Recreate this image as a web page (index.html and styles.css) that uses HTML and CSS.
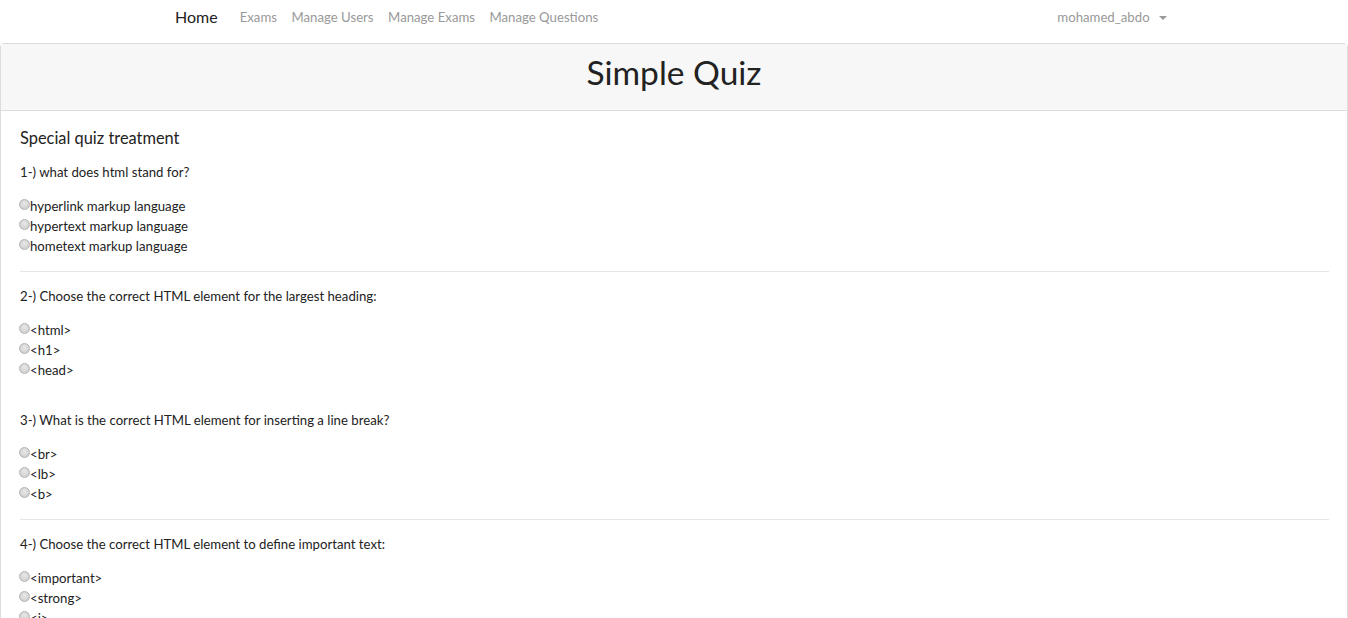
FILE: index.html
```html
<!DOCTYPE html>
<html>
<head>
<meta charset="utf-8">
<link rel="stylesheet" href="styles.css">
</head>
<body>
<nav class="navbar">
  <div class="nav-left">
    <a class="brand">Home</a>
    <a class="nav-link">Exams</a>
    <a class="nav-link">Manage Users</a>
    <a class="nav-link">Manage Exams</a>
    <a class="nav-link">Manage Questions</a>
  </div>
  <div class="nav-right">
    <a class="nav-link user">mohamed_abdo <span class="caret"></span></a>
  </div>
</nav>
<div class="card">
  <div class="card-header"><h1>Simple Quiz</h1></div>
  <div class="card-body">
    <h5 class="quiz-title">Special quiz treatment</h5>
    <div class="question">
      <p class="q-text">1-) what does html stand for?</p>
      <div class="opt"><span class="radio"></span>hyperlink markup language</div>
      <div class="opt"><span class="radio"></span>hypertext markup language</div>
      <div class="opt"><span class="radio"></span>hometext markup language</div>
    </div>
    <div class="sep"></div>
    <div class="question">
      <p class="q-text">2-) Choose the correct HTML element for the largest heading:</p>
      <div class="opt"><span class="radio"></span>&lt;html&gt;</div>
      <div class="opt"><span class="radio"></span>&lt;h1&gt;</div>
      <div class="opt"><span class="radio"></span>&lt;head&gt;</div>
    </div>
    <div class="sep blank"></div>
    <div class="question">
      <p class="q-text">3-) What is the correct HTML element for inserting a line break?</p>
      <div class="opt"><span class="radio"></span>&lt;br&gt;</div>
      <div class="opt"><span class="radio"></span>&lt;lb&gt;</div>
      <div class="opt"><span class="radio"></span>&lt;b&gt;</div>
    </div>
    <div class="sep"></div>
    <div class="question">
      <p class="q-text">4-) Choose the correct HTML element to define important text:</p>
      <div class="opt"><span class="radio"></span>&lt;important&gt;</div>
      <div class="opt"><span class="radio"></span>&lt;strong&gt;</div>
      <div class="opt"><span class="radio"></span>&lt;i&gt;</div>
    </div>
  </div>
</div>
</body>
</html>
```
FILE: styles.css
```css
html, body {
  margin: 0;
  padding: 0;
  background: #fff;
  font-family: "Lato", "Open Sans", sans-serif;
  color: #222;
}
.navbar {
  height: 43px;
  display: flex;
  justify-content: space-between;
  align-items: flex-start;
  padding: 7px 181px 0 175px;
  box-sizing: border-box;
  line-height: 20px;
}
.nav-left, .nav-right {
  display: flex;
  align-items: center;
}
.brand {
  font-size: 16px;
  color: #222;
  margin-right: 22px;
}
.nav-link {
  font-size: 13.2px;
  color: #999;
  margin-right: 14.5px;
}
.nav-right .nav-link { margin-right: 0; }
.caret {
  display: inline-block;
  width: 0;
  height: 0;
  border-left: 4px solid transparent;
  border-right: 4px solid transparent;
  border-top: 4px solid #999;
  vertical-align: middle;
  margin-left: 6px;
  margin-top: -2px;
}
.card {
  border: 1px solid #dcdcdc;
  border-radius: 4px 4px 0 0;
  min-height: 600px;
}
.card-header {
  background: #f7f7f7;
  height: 67px;
  box-sizing: border-box;
  padding-bottom: 11px;
  border-bottom: 1px solid #dcdcdc;
  display: flex;
  align-items: center;
  justify-content: center;
}
.card-header h1 {
  margin: 0;
  font-size: 33.5px;
  font-weight: 400;
  line-height: 40px;
  color: #222;
}
.card-body {
  padding: 16px 18px 0 19px;
}
.quiz-title {
  margin: 0 0 13px;
  font-size: 16.4px;
  font-weight: 400;
  line-height: 22px;
  color: #222;
}
.q-text {
  margin: 0 0 14px;
  font-size: 13.2px;
  line-height: 20px;
  color: #222;
}
.opt {
  font-size: 13.2px;
  line-height: 20px;
  color: #222;
  display: flex;
  align-items: center;
}
.radio {
  width: 9px;
  height: 9px;
  border: 1px solid #b4b4b4;
  border-radius: 50%;
  background: radial-gradient(circle at 50% 40%, #e8e8e8, #c8c8c8);
  margin-top: -4px;
  margin-left: -1px;
  flex-shrink: 0;
}
.sep {
  border-top: 1px solid #e6e6e6;
  margin: 15px 0 14px;
}
.sep.blank { border-top-color: transparent; }
```
